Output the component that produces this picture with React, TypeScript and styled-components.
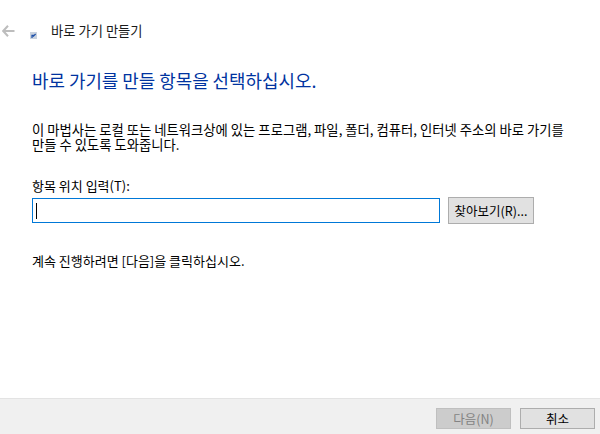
import React from "react";
import styled, { createGlobalStyle } from "styled-components";

const GlobalStyle = createGlobalStyle`
  html, body {
    margin: 0;
    padding: 0;
    background: #ffffff;
  }
  body {
    font-family: "Noto Sans CJK KR", "Liberation Sans", sans-serif;
    font-size: 13px;
    color: #000000;
  }
`;

export default function App() {
  return (
    <>
      <GlobalStyle />
      <Wizard>
        <TitleBar>
          <BackIcon width="13" height="12" viewBox="0 0 13 12">
            <path d="M6 .8 1.2 6 6 11.2M1.5 6H12.5" fill="none" stroke="#bdbdbd" strokeWidth="2" />
          </BackIcon>
          <ShortcutIcon width="7" height="7" viewBox="0 0 7 7">
            <rect width="7" height="7" fill="#c9d2de" />
            <path d="M2 6V3.4h2.6M3 4.6 5.6 2" fill="none" stroke="#1d4fa8" strokeWidth="1.2" />
          </ShortcutIcon>
          <WindowTitle>바로 가기 만들기</WindowTitle>
        </TitleBar>
        <Content>
          <Heading>바로 가기를 만들 항목을 선택하십시오.</Heading>
          <Description>
            <DescriptionLine>이 마법사는 로컬 또는 네트워크상에 있는 프로그램, 파일, 폴더, 컴퓨터, 인터넷 주소의 바로 가기를</DescriptionLine>
            <DescriptionLine>만들 수 있도록 도와줍니다.</DescriptionLine>
          </Description>
          <FieldLabel htmlFor="location">항목 위치 입력(T):</FieldLabel>
          <FieldRow>
            <LocationInput id="location">
              <Caret />
            </LocationInput>
            <BrowseButton type="button">찾아보기(R)...</BrowseButton>
          </FieldRow>
          <Hint>계속 진행하려면 [다음]을 클릭하십시오.</Hint>
        </Content>
        <Footer>
          <FooterButton type="button" disabled>다음(N)</FooterButton>
          <FooterButton type="button">취소</FooterButton>
        </Footer>
      </Wizard>
    </>
  );
}

const Wizard = styled.div`
  display: flex;
  flex-direction: column;
  width: 600px;
  height: 434px;
  overflow: hidden;
  background: #ffffff;
`;

const TitleBar = styled.div`
  display: flex;
  align-items: center;
  height: 20px;
  margin-top: 21px;
  padding-left: 2px;
`;

const BackIcon = styled.svg`
  flex: none;
  margin-right: 15px;
`;

const ShortcutIcon = styled.svg`
  flex: none;
  margin-top: 9px;
  margin-right: 14px;
`;

const WindowTitle = styled.span`
  font-size: 13.3px;
  line-height: 20px;
  color: #1a1a1a;
`;

const Content = styled.div`
  flex: 1;
  display: flex;
  flex-direction: column;
  padding: 0 32px;
`;

const Heading = styled.h1`
  margin: 28px 0 0;
  font-size: 17.9px;
  font-weight: 400;
  line-height: 22px;
  color: #0033a0;
  white-space: nowrap;
`;

const Description = styled.div`
  margin: 31px 0 0;
  font-size: 13.33px;
  white-space: nowrap;
`;

const DescriptionLine = styled.div`
  height: 15px;
  line-height: 15px;
`;

const FieldLabel = styled.label`
  margin-top: 25px;
  font-size: 13px;
  line-height: 18px;
`;

const FieldRow = styled.div`
  display: flex;
  align-items: center;
  gap: 8px;
  margin-top: 2px;
`;

const LocationInput = styled.div`
  box-sizing: border-box;
  display: flex;
  align-items: center;
  width: 408px;
  height: 25px;
  padding-left: 3px;
  border: 1px solid #0078d7;
`;

const Caret = styled.span`
  width: 1px;
  height: 16px;
  background: #000000;
`;

const BrowseButton = styled.button`
  box-sizing: border-box;
  width: 86px;
  height: 27px;
  padding: 0;
  border: 1px solid #adadad;
  background: #e1e1e1;
  font-family: inherit;
  font-size: 12.5px;
  color: #000000;
`;

const Hint = styled.p`
  margin: 28px 0 0;
  font-size: 13px;
  line-height: 18px;
`;

const Footer = styled.div`
  box-sizing: border-box;
  display: flex;
  justify-content: flex-end;
  align-items: flex-start;
  gap: 9px;
  height: 36px;
  padding: 9px 5px 0 0;
  border-top: 1px solid #e3e3e3;
  background: #f0f0f0;
`;

const FooterButton = styled.button`
  box-sizing: border-box;
  width: 75px;
  height: 21px;
  padding: 0;
  border: 1px solid #adadad;
  background: #e1e1e1;
  font-family: inherit;
  font-size: 12.5px;
  line-height: 18px;
  color: #000000;

  &:disabled {
    border-color: #bfbfbf;
    background: #cccccc;
    color: #838383;
  }
`;
